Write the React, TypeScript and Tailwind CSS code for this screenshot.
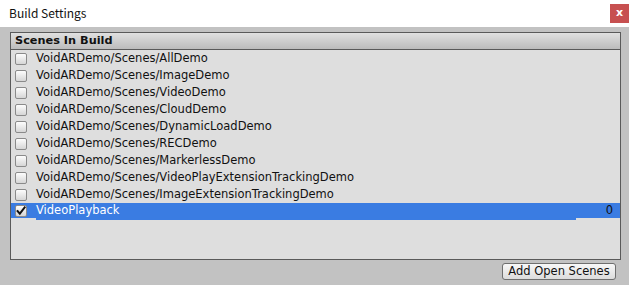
const scenes = [
  "VoidARDemo/Scenes/AllDemo",
  "VoidARDemo/Scenes/ImageDemo",
  "VoidARDemo/Scenes/VideoDemo",
  "VoidARDemo/Scenes/CloudDemo",
  "VoidARDemo/Scenes/DynamicLoadDemo",
  "VoidARDemo/Scenes/RECDemo",
  "VoidARDemo/Scenes/MarkerlessDemo",
  "VoidARDemo/Scenes/VideoPlayExtensionTrackingDemo",
  "VoidARDemo/Scenes/ImageExtensionTrackingDemo",
];

function Checkbox({ checked }: { checked?: boolean }) {
  return (
    <div className="w-[12px] h-[12px] rounded-[2px] border border-[#8a8a8a] bg-gradient-to-b from-[#fdfdfd] to-[#d6d6d6] flex items-center justify-center shrink-0">
      {checked && (
        <svg width="12" height="12" viewBox="0 0 12 12">
          <path d="M1.8 6 L4.6 9.2 L10.4 1.6" fill="none" stroke="#111" strokeWidth="2.3" strokeLinecap="square" />
        </svg>
      )}
    </div>
  );
}

export default function App() {
  return (
    <div className="w-[629px] h-[285px] flex flex-col bg-[#c2c2c2] overflow-hidden">
      {/* Title bar */}
      <div className="h-[27px] bg-white flex items-start justify-between shrink-0">
        <span className="pl-[9px] pt-[5px] text-[12px] leading-[16px] text-[#111] font-['Noto_Sans_CJK_SC',sans-serif]">
          Build Settings
        </span>
        <div className="mt-[4px] w-[19px] h-[19px] bg-[#c75050] flex items-center justify-center text-white text-[11px] font-bold leading-none font-['DejaVu_Sans',sans-serif] pb-[2px]">
          x
        </div>
      </div>

      {/* Scenes In Build panel */}
      <div className="mt-[5px] ml-[10px] w-[611px] h-[228px] border border-[#5a5a5a] bg-[#dedede] flex flex-col font-['DejaVu_Sans',sans-serif] text-[11.5px]">
        <div className="h-[17px] border-b border-[#5a5a5a] bg-gradient-to-b from-[#e0e0e0] to-[#bcbcbc] flex items-center pl-[4px] font-bold text-[11.3px] text-[#111] shrink-0">
          Scenes In Build
        </div>
        {scenes.map((s) => (
          <div key={s} className="h-[17px] flex items-center pl-[4px] text-[#111]">
            <Checkbox />
            <span className="ml-[9px] leading-[17px]">{s}</span>
          </div>
        ))}
        <div className="flex flex-col">
          <div className="h-[15px] bg-[#3a7ce2] flex items-center pl-[4px] pr-[7px] text-white">
            <Checkbox checked />
            <span className="ml-[9px] flex-1 leading-[15px]">VideoPlayback</span>
            <span className="text-[#111]">0</span>
          </div>
          <div className="h-[2px] ml-[25px] w-[540px] bg-[#3a7ce2]" />
        </div>
      </div>

      {/* Bottom button */}
      <div className="flex justify-end mt-[3px] pr-[13px]">
        <button className="w-[114px] h-[17px] rounded-[3px] border border-[#6f6f6f] bg-gradient-to-b from-[#f8f8f8] to-[#dcdcdc] text-[11.5px] leading-none text-[#111] font-['DejaVu_Sans',sans-serif] flex items-center justify-center">
          Add Open Scenes
        </button>
      </div>
    </div>
  );
}
